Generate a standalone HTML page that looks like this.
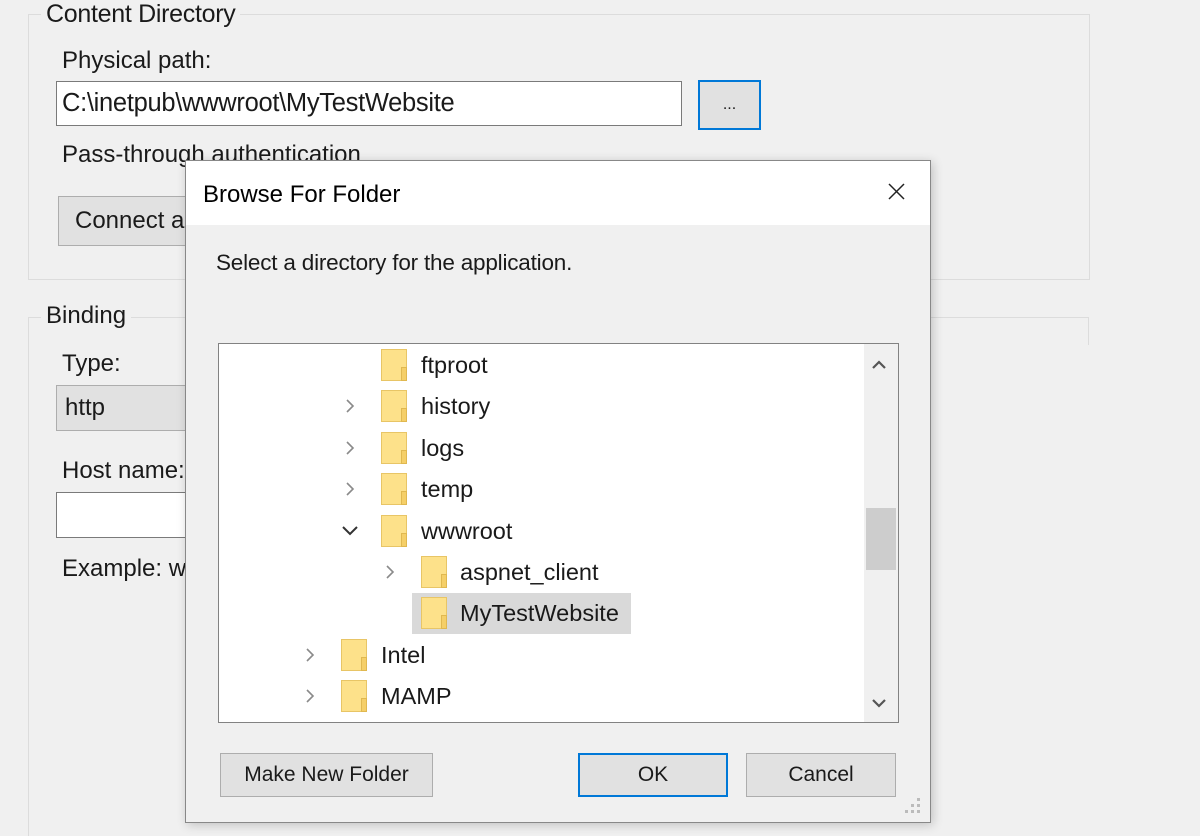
<!DOCTYPE html><html><head><style>
html,body{margin:0;width:1200px;height:836px;overflow:hidden}
body{background:#f0f0f0;font-family:"Liberation Sans",sans-serif;color:#1a1a1a;position:relative;font-size:24px}
.a{position:absolute}
.ln{position:absolute;background:#dcdcdc}
.lbl{position:absolute;background:#f0f0f0;padding:0 5px}
.row{position:absolute;height:40px;line-height:40px;font-size:23.5px;width:1px}
.row span{white-space:nowrap}
.fold{position:absolute;width:26px;height:32px;top:4px;background:#fde18a;border:1px solid #e8c566;box-sizing:border-box}
.fold:after{content:"";position:absolute;right:-1px;bottom:-1px;width:6px;height:14px;background:#f5cf68;border:1px solid #e0b850;box-sizing:border-box}
.chev{position:absolute;top:13px}
.btn{position:absolute;background:#e1e1e1;border:1px solid #adadad;box-sizing:border-box;text-align:center;font-size:21px;line-height:42px}
</style></head><body>
<div class="a" style="left:28px;top:14px;width:1060px;height:264px;border:1px solid #dcdcdc"></div>
<div class="lbl" style="left:41px;top:0px;font-size:25px;letter-spacing:-0.3px">Content Directory</div>
<div class="a" style="left:62px;top:47px">Physical path:</div>
<div class="a" style="left:56px;top:81px;width:626px;height:45px;background:#fff;border:1px solid #7a7a7a;box-sizing:border-box;line-height:42px;padding-left:5px;font-size:25.5px;letter-spacing:-0.3px">C:\inetpub\wwwroot\MyTestWebsite</div>
<div class="a" style="left:698px;top:80px;width:63px;height:50px;background:#e1e1e1;border:2px solid #0078d7;box-sizing:border-box;text-align:center;line-height:46px;font-size:16px">...</div>
<div class="a" style="left:62px;top:141px">Pass-through authentication</div>
<div class="btn" style="left:58px;top:196px;width:200px;height:50px;line-height:48px;text-align:left;padding-left:16px;font-size:24px">Connect as...</div>
<div class="ln" style="left:28px;top:317px;width:1061px;height:1px"></div>
<div class="ln" style="left:28px;top:317px;width:1px;height:520px"></div>
<div class="ln" style="left:1088px;top:317px;width:1px;height:28px"></div>
<div class="lbl" style="left:41px;top:302px;">Binding</div>
<div class="a" style="left:62px;top:350px">Type:</div>
<div class="a" style="left:56px;top:385px;width:200px;height:46px;background:#e1e1e1;border:1px solid #adadad;box-sizing:border-box;line-height:44px;padding-left:8px">http</div>
<div class="a" style="left:62px;top:457px">Host name:</div>
<div class="a" style="left:56px;top:492px;width:200px;height:46px;background:#fff;border:1px solid #7a7a7a;box-sizing:border-box"></div>
<div class="a" style="left:62px;top:555px">Example: www</div>

<div class="a" style="left:185px;top:160px;width:746px;height:663px;background:#f0f0f0;border:1px solid #888;box-sizing:border-box;box-shadow:2px 2px 10px rgba(0,0,0,.2)">
 <div class="a" style="left:0;top:0;width:744px;height:64px;background:#fff"></div>
 <div class="a" style="left:17px;top:20px;font-size:24px;color:#000">Browse For Folder</div>
 <svg class="a" style="left:702px;top:22px" width="17" height="17"><path d="M1 1L16 16M16 1L1 16" stroke="#222" stroke-width="1.5"/></svg>
 <div class="a" style="left:30px;top:89px;font-size:22.5px;letter-spacing:-0.2px">Select a directory for the application.</div>
 <div class="a" style="left:32px;top:182px;width:681px;height:380px;background:#fff;border:1px solid #828282;box-sizing:border-box">
  <div class="a" style="right:0;top:0;width:34px;height:378px;background:#f0f0f0"></div>
  <div class="a" style="right:2px;top:164px;width:30px;height:62px;background:#cdcdcd"></div>
  <svg class="a" style="left:652px;top:16px" width="16" height="10"><path d="M2 8L8 2L14 8" fill="none" stroke="#555" stroke-width="2.2"/></svg>
  <svg class="a" style="left:652px;top:354px" width="16" height="10"><path d="M2 2L8 8L14 2" fill="none" stroke="#555" stroke-width="2.2"/></svg>
 </div>
 <svg class="a" style="left:718px;top:636px" width="20" height="20"><g fill="#bbb"><rect x="13" y="1" width="3" height="3"/><rect x="7" y="7" width="3" height="3"/><rect x="13" y="7" width="3" height="3"/><rect x="1" y="13" width="3" height="3"/><rect x="7" y="13" width="3" height="3"/><rect x="13" y="13" width="3" height="3"/></g></svg>
</div>
<svg width="0" height="0" style="position:absolute"><defs>
<path id="r" d="M1 1L7 7L1 13" fill="none" stroke="#8a8a8a" stroke-width="1.6"/>
</defs></svg>
<div class="row" style="left:0;top:345px"><div class="fold" style="left:381px"></div><span class="a" style="left:421px">ftproot</span></div>
<div class="row" style="left:0;top:386px"><svg class="chev" style="left:346px" width="10" height="16"><use href="#r"/></svg><div class="fold" style="left:381px"></div><span class="a" style="left:421px">history</span></div>
<div class="row" style="left:0;top:428px"><svg class="chev" style="left:346px" width="10" height="16"><use href="#r"/></svg><div class="fold" style="left:381px"></div><span class="a" style="left:421px">logs</span></div>
<div class="row" style="left:0;top:469px"><svg class="chev" style="left:346px" width="10" height="16"><use href="#r"/></svg><div class="fold" style="left:381px"></div><span class="a" style="left:421px">temp</span></div>
<div class="row" style="left:0;top:511px"><svg class="chev" style="left:342px;top:15px" width="16" height="10"><path d="M1 1L8 8L15 1" fill="none" stroke="#333" stroke-width="2"/></svg><div class="fold" style="left:381px"></div><span class="a" style="left:421px">wwwroot</span></div>
<div class="row" style="left:0;top:552px"><svg class="chev" style="left:386px" width="10" height="16"><use href="#r"/></svg><div class="fold" style="left:421px"></div><span class="a" style="left:460px">aspnet_client</span></div>
<div class="a" style="left:412px;top:593px;width:219px;height:41px;background:#d9d9d9"></div>
<div class="row" style="left:0;top:593px"><div class="fold" style="left:421px"></div><span class="a" style="left:460px">MyTestWebsite</span></div>
<div class="row" style="left:0;top:635px"><svg class="chev" style="left:306px" width="10" height="16"><use href="#r"/></svg><div class="fold" style="left:341px"></div><span class="a" style="left:381px">Intel</span></div>
<div class="row" style="left:0;top:676px"><svg class="chev" style="left:306px" width="10" height="16"><use href="#r"/></svg><div class="fold" style="left:341px"></div><span class="a" style="left:381px">MAMP</span></div>
<div class="btn" style="left:220px;top:753px;width:213px;height:44px">Make New Folder</div>
<div class="btn" style="left:578px;top:753px;width:150px;height:44px;border:2px solid #0078d7;line-height:40px">OK</div>
<div class="btn" style="left:746px;top:753px;width:150px;height:44px">Cancel</div>
</body></html>
